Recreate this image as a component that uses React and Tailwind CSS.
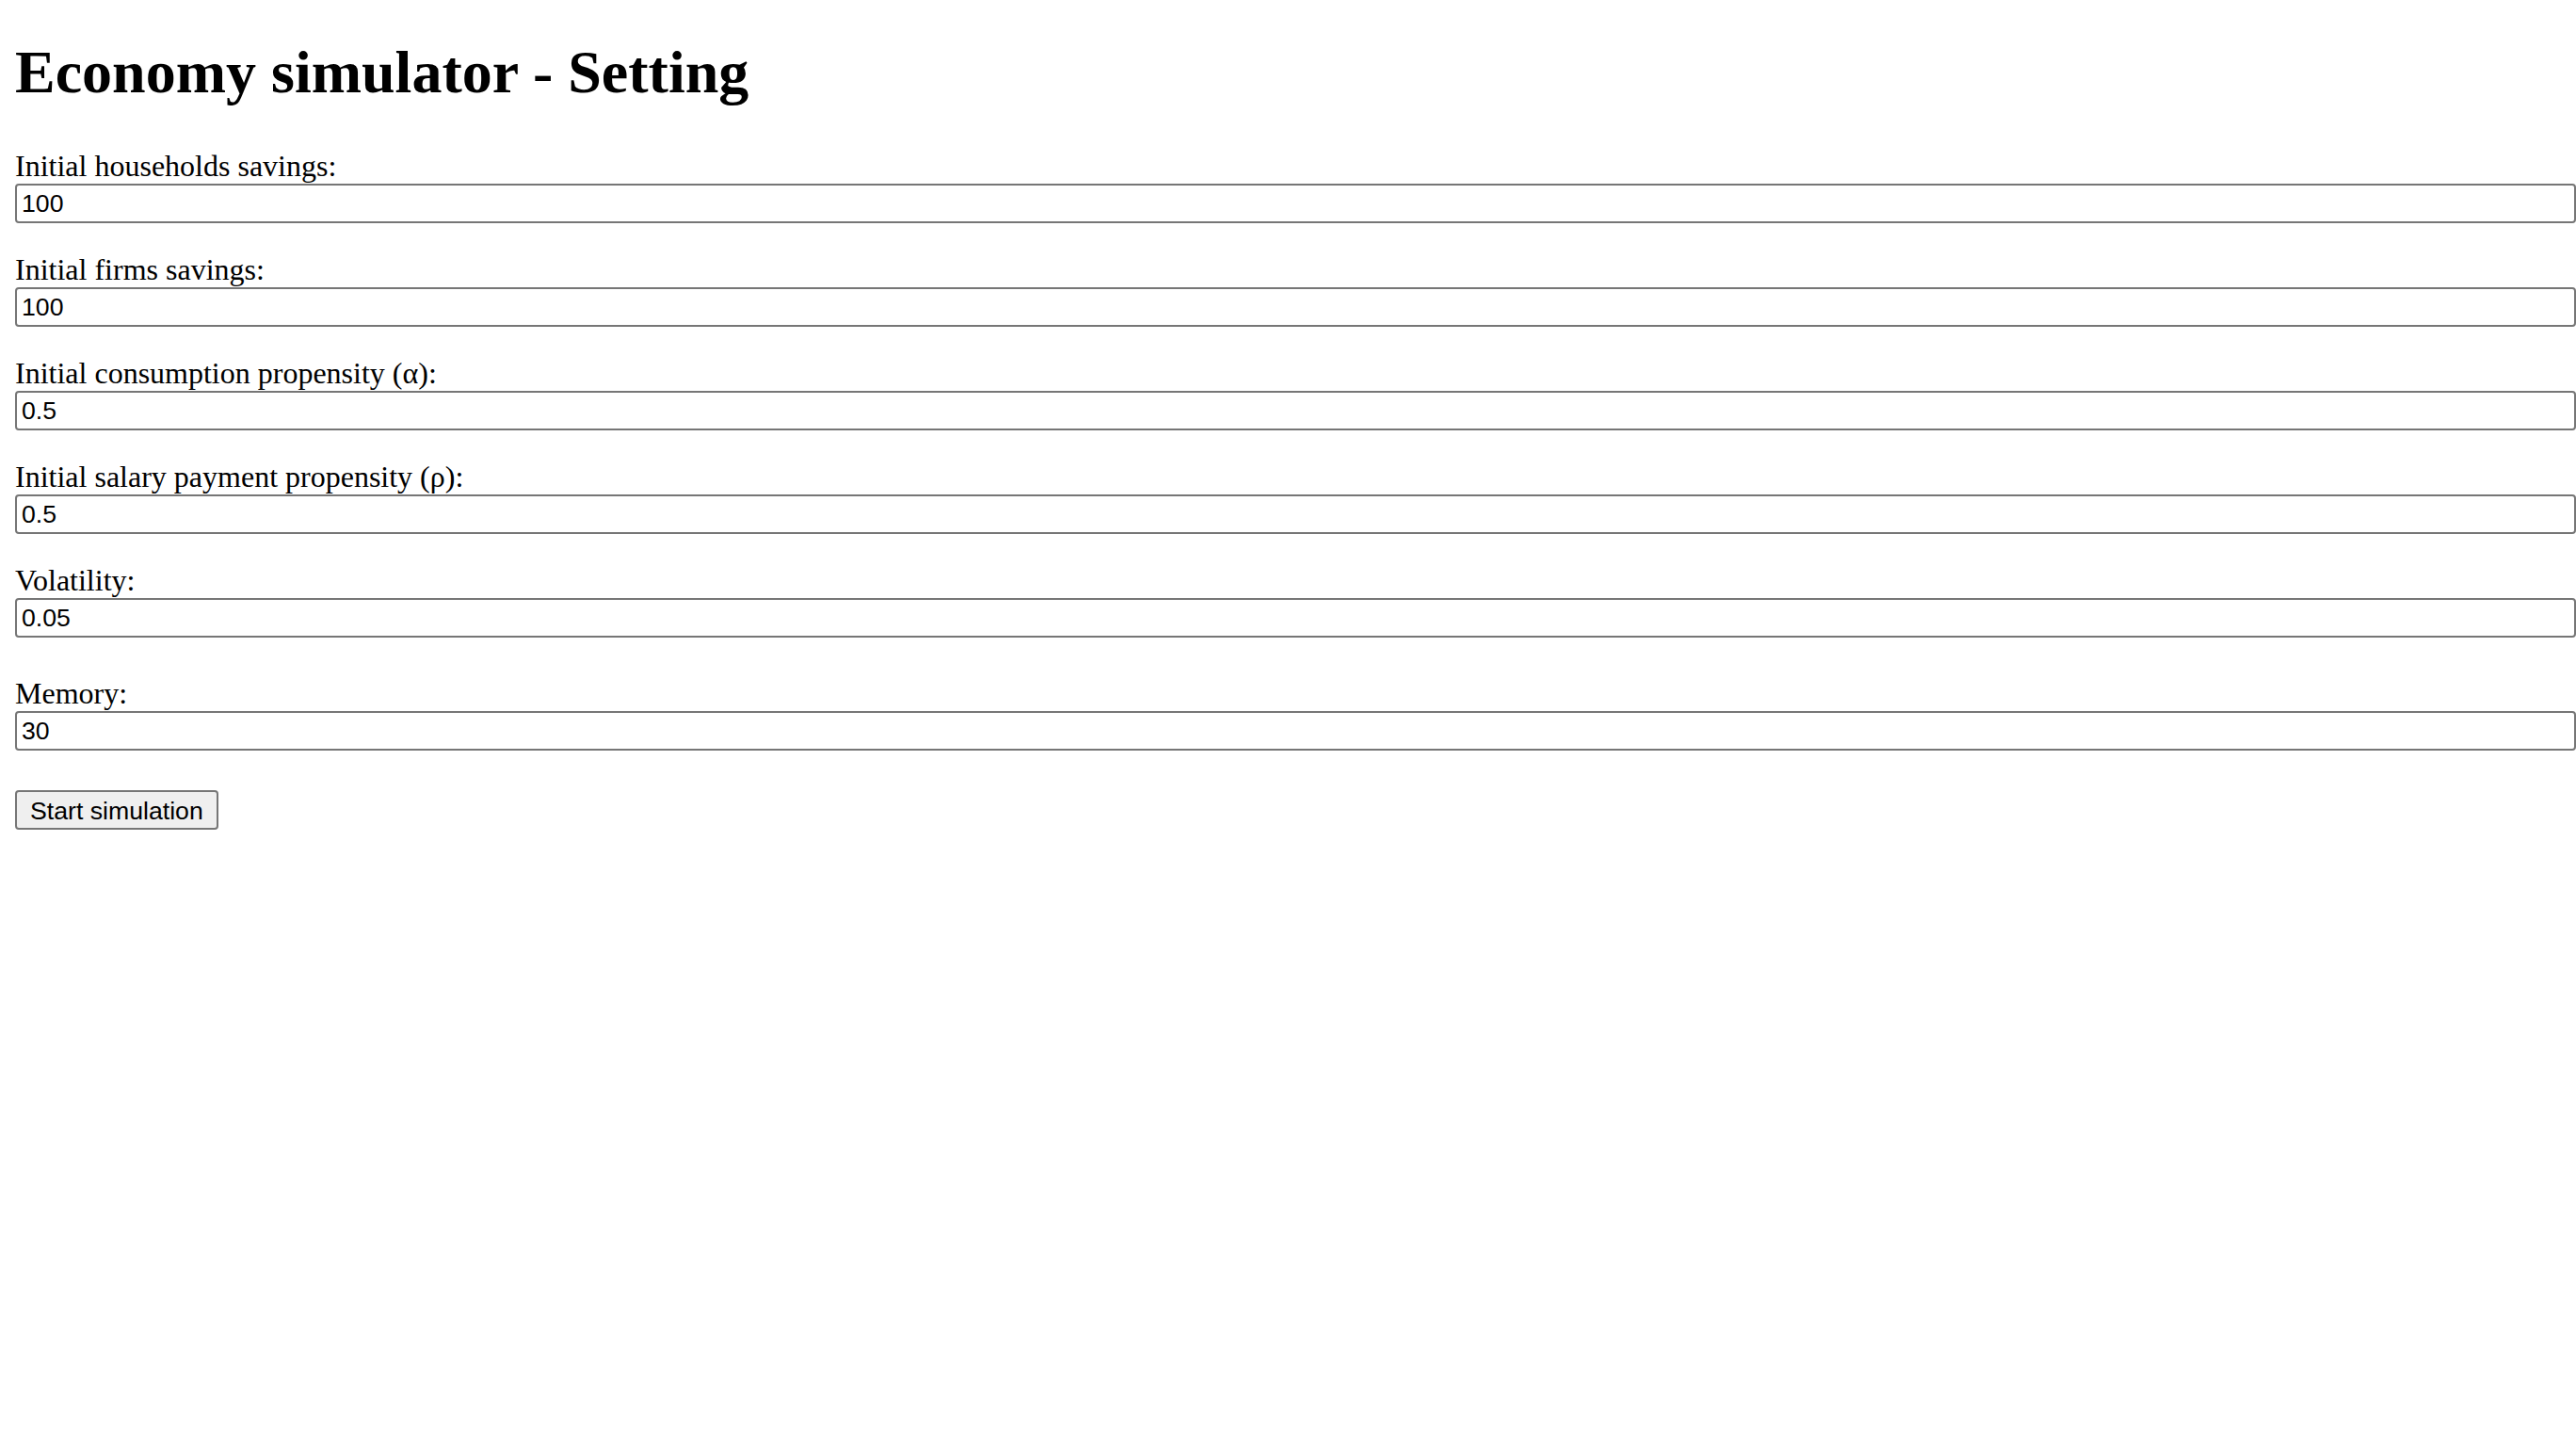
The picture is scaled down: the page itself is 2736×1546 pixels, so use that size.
import React from "react";

const fields = [
  { label: "Initial households savings:", value: "100" },
  { label: "Initial firms savings:", value: "100" },
  { label: "Initial consumption propensity (α):", value: "0.5" },
  { label: "Initial salary payment propensity (ρ):", value: "0.5" },
  { label: "Volatility:", value: "0.05" },
];

function Field({ label, value, className }) {
  return (
    <div className={"flex flex-col " + (className || "")}>
      <label className="text-[32px] leading-[36px] text-black">{label}</label>
      <input
        type="text"
        defaultValue={value}
        className="mt-px h-[42px] w-full rounded-[4px] border-2 border-[#767676] bg-white px-[5px] text-[26.67px] text-black outline-none"
        style={{ fontFamily: '"Liberation Sans", Arial, sans-serif' }}
      />
    </div>
  );
}

export default function App() {
  return (
    <div
      className="min-h-screen bg-white pl-4 pt-[40px] text-black"
      style={{ fontFamily: '"Liberation Serif", "Times New Roman", serif' }}
    >
      <h1 className="text-[64px] font-bold leading-[74px]">Economy simulator - Setting</h1>
      <div className="mt-[44px] flex flex-col gap-[31px]">
        {fields.map((f) => (
          <Field key={f.label} label={f.label} value={f.value} />
        ))}
      </div>
      <Field className="mt-[41px]" label="Memory:" value="30" />
      <button
        type="button"
        className="mt-[42px] h-[42px] rounded-[4px] border-2 border-[#767676] bg-[#efefef] px-[14px] text-[26.67px] text-black"
        style={{ fontFamily: '"Liberation Sans", Arial, sans-serif' }}
      >
        Start simulation
      </button>
    </div>
  );
}
